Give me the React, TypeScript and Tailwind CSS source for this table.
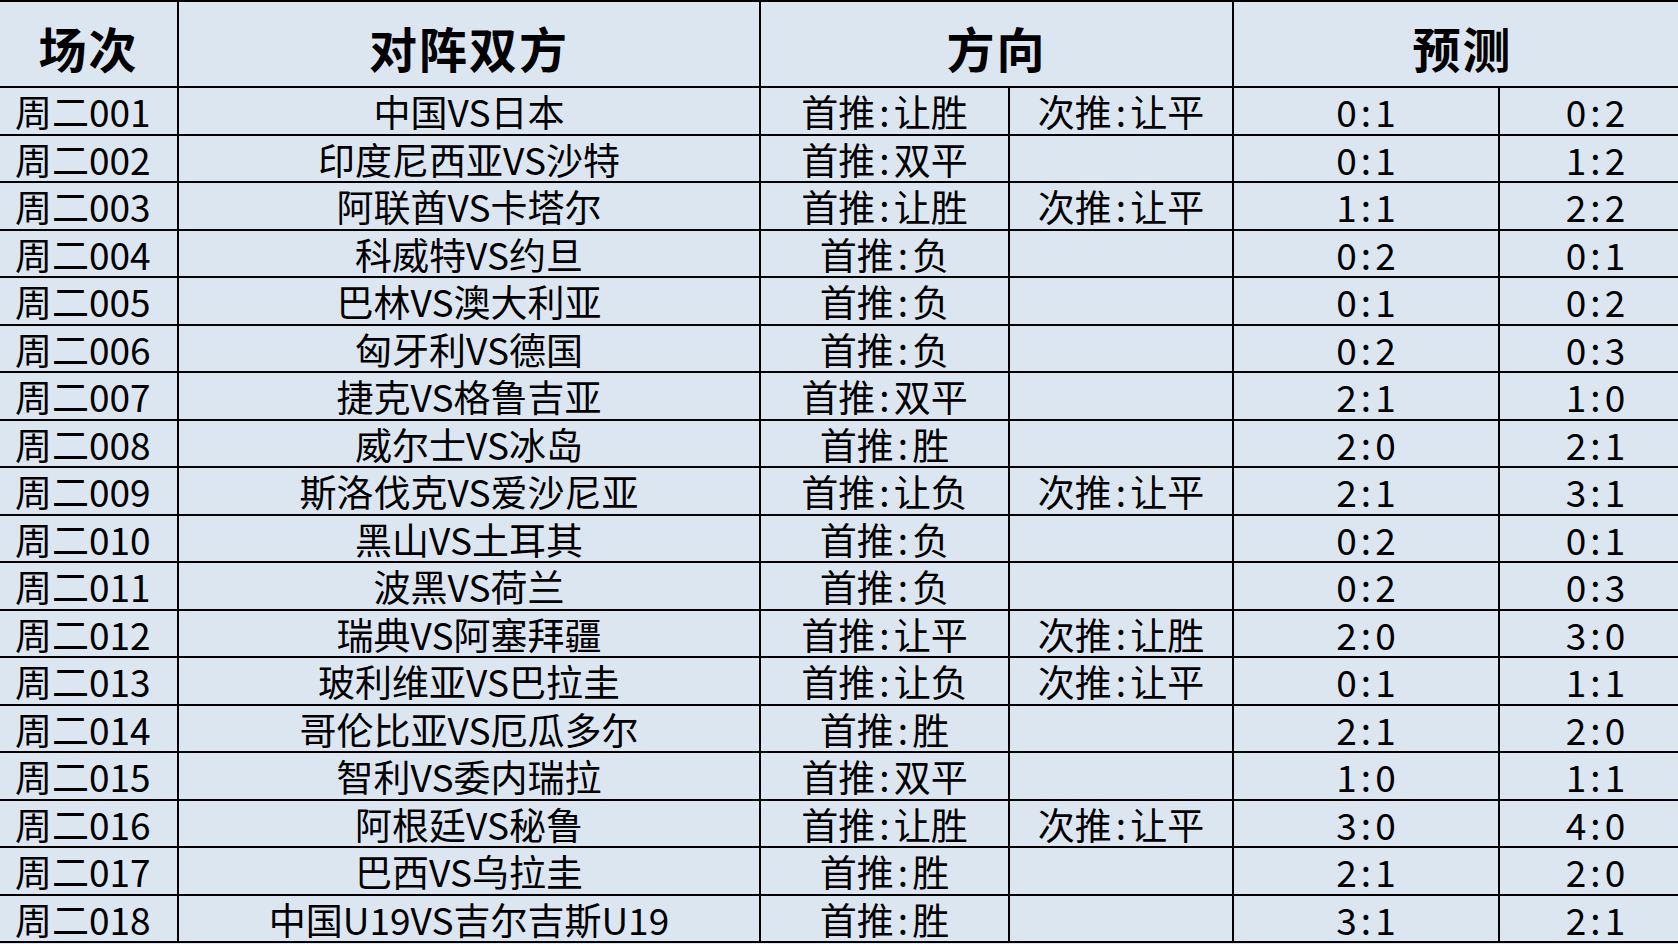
import React from "react";

type Row = [string, string, string, string, string, string];

const rows: Row[] = [
  ["周二001", "中国VS日本", "首推:让胜", "次推:让平", "0:1", "0:2"],
  ["周二002", "印度尼西亚VS沙特", "首推:双平", "", "0:1", "1:2"],
  ["周二003", "阿联酋VS卡塔尔", "首推:让胜", "次推:让平", "1:1", "2:2"],
  ["周二004", "科威特VS约旦", "首推:负", "", "0:2", "0:1"],
  ["周二005", "巴林VS澳大利亚", "首推:负", "", "0:1", "0:2"],
  ["周二006", "匈牙利VS德国", "首推:负", "", "0:2", "0:3"],
  ["周二007", "捷克VS格鲁吉亚", "首推:双平", "", "2:1", "1:0"],
  ["周二008", "威尔士VS冰岛", "首推:胜", "", "2:0", "2:1"],
  ["周二009", "斯洛伐克VS爱沙尼亚", "首推:让负", "次推:让平", "2:1", "3:1"],
  ["周二010", "黑山VS土耳其", "首推:负", "", "0:2", "0:1"],
  ["周二011", "波黑VS荷兰", "首推:负", "", "0:2", "0:3"],
  ["周二012", "瑞典VS阿塞拜疆", "首推:让平", "次推:让胜", "2:0", "3:0"],
  ["周二013", "玻利维亚VS巴拉圭", "首推:让负", "次推:让平", "0:1", "1:1"],
  ["周二014", "哥伦比亚VS厄瓜多尔", "首推:胜", "", "2:1", "2:0"],
  ["周二015", "智利VS委内瑞拉", "首推:双平", "", "1:0", "1:1"],
  ["周二016", "阿根廷VS秘鲁", "首推:让胜", "次推:让平", "3:0", "4:0"],
  ["周二017", "巴西VS乌拉圭", "首推:胜", "", "2:1", "2:0"],
  ["周二018", "中国U19VS吉尔吉斯U19", "首推:胜", "", "3:1", "2:1"],
];

const cell =
  "bg-[#dce6f1] flex items-center justify-center whitespace-nowrap leading-none pt-[2px]";

function Colon({ text }: { text: string }) {
  if (!text) return null;
  const idx = text.indexOf(":");
  if (idx < 0) return <span>{text}</span>;
  return (
    <span>
      {text.slice(0, idx)}
      <span className="mx-[4px]">:</span>
      {text.slice(idx + 1)}
    </span>
  );
}

export default function App() {
  return (
    <div
      className="w-[1678px] h-[944px] overflow-hidden bg-[#dce6f1] text-black"
      style={{ fontFamily: '"Noto Sans CJK SC", "Noto Sans", sans-serif' }}
    >
      <div className="w-[1691px] bg-black pt-[2px] pb-[2px] grid grid-cols-[177px_580px_247px_222px_264px_191px] grid-rows-[84px_repeat(18,45.5px)] gap-[2px]">
        <div className={`${cell} text-[48px] font-bold pt-[6px] tracking-[2px]`}>场次</div>
        <div className={`${cell} text-[48px] font-bold pt-[6px] tracking-[2px]`}>对阵双方</div>
        <div className={`${cell} col-span-2 text-[48px] font-bold pt-[6px] tracking-[2px]`}>方向</div>
        <div className={`${cell} col-span-2 text-[48px] font-bold pt-[6px] tracking-[2px]`}>预测</div>
        {rows.map((r, i) => (
          <React.Fragment key={i}>
            <div className={`${cell} justify-start pl-[15px] text-[37px]`}>{r[0]}</div>
            <div className={`${cell} text-[37px]`}>{r[1]}</div>
            <div className={`${cell} text-[37px]`}>
              <Colon text={r[2]} />
            </div>
            <div className={`${cell} text-[37px]`}>
              <Colon text={r[3]} />
            </div>
            <div className={`${cell} text-[37px]`}>
              <Colon text={r[4]} />
            </div>
            <div className={`${cell} text-[37px]`}>
              <Colon text={r[5]} />
            </div>
          </React.Fragment>
        ))}
      </div>
    </div>
  );
}
